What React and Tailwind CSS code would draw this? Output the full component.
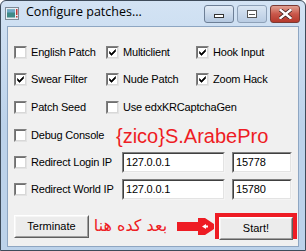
import React from "react";

const F = { fontFamily: '"Liberation Sans", Arial, sans-serif' };

function Check({ checked }) {
  return (
    <div className="w-[13px] h-[13px] shrink-0 border border-t-[#808080] border-l-[#808080] border-b-[#e3e3e3] border-r-[#e3e3e3] bg-white flex items-center justify-center">
      <div className="w-[11px] h-[11px] border border-t-[#6f6f6f] border-l-[#6f6f6f] border-b-[#d8d8d8] border-r-[#d8d8d8] bg-white flex items-center justify-center">
        {checked && (
          <svg width="9" height="9" viewBox="0 0 9 9">
            <path d="M1.5 3.5 L3.5 5.5 L7.5 1.5 L7.5 3.5 L3.5 7.5 L1.5 5.5 Z" fill="#000" stroke="#000" strokeWidth="0.6" />
          </svg>
        )}
      </div>
    </div>
  );
}

function CB({ label, checked, w }) {
  return (
    <div className={`flex items-center gap-[4px] ${w || ""}`}>
      <Check checked={checked} />
      <span className="text-[11px] tracking-[-0.2px] text-black leading-none whitespace-nowrap">{label}</span>
    </div>
  );
}

function TextBox({ value, w }) {
  return (
    <div className={`${w} h-[21px] border border-t-[#808080] border-l-[#808080] border-b-[#f4f4f4] border-r-[#f4f4f4] bg-white`}>
      <div className="h-full border border-t-[#404040] border-l-[#404040] border-b-[#e3e3e3] border-r-[#e3e3e3] flex items-center pl-[2px] text-[11px] tracking-[-0.2px] text-black">
        {value}
      </div>
    </div>
  );
}

function Button({ children, w }) {
  return (
    <div className={`${w} h-[23px] border border-t-white border-l-white border-b-[#5f5f5f] border-r-[#5f5f5f] bg-[#ececec]`}>
      <div className="h-full border border-t-[#f6f6f6] border-l-[#f6f6f6] border-b-[#a0a0a0] border-r-[#a0a0a0] flex items-center justify-center text-[11px] text-black">
        {children}
      </div>
    </div>
  );
}

export default function App() {
  return (
    <div className="w-[306px] h-[251px] overflow-hidden" style={F}>
      <div className="w-[306px] h-[251px] flex flex-col border border-[#3e4b5a] rounded-t-[6px] bg-[#bcd2ea] bg-gradient-to-b from-[#d3e3f4] via-[#bcd2ea] to-[#bcd2ea]">
        {/* title bar */}
        <div className="h-[25px] flex items-start shrink-0">
          <svg className="ml-[4px] mt-[6px]" width="14" height="13" viewBox="0 0 14 13">
            <rect x="0.5" y="0.5" width="13" height="12" fill="#e8eef4" stroke="#7d8a96" />
            <rect x="2" y="2.5" width="8" height="8" fill="#3f8a88" />
            <rect x="2" y="2.5" width="8" height="3" fill="#6fa9c8" />
            <rect x="11" y="2" width="1.5" height="6" fill="#c23a3a" />
            <rect x="11" y="9" width="1.5" height="1.5" fill="#c23a3a" />
          </svg>
          <span className="ml-[7px] mt-[5px] text-[12.5px] text-black leading-none" style={{ fontFamily: '"Open Sans", "Liberation Sans", sans-serif' }}>
            Configure patches...
          </span>
          <div className="ml-auto mr-[5px] mt-[4px] flex gap-[3px]">
            <div className="w-[30px] h-[18px] rounded-[3px] border border-[#6d7f96] bg-gradient-to-b from-[#e3ecf6] to-[#b4c8e0] flex items-center justify-center">
              <div className="w-[10px] h-[4px] mt-[4px] border border-[#333] bg-white" />
            </div>
            <div className="w-[30px] h-[18px] rounded-[3px] border border-[#8ea1b8] bg-gradient-to-b from-[#d9e5f2] to-[#b9cce3] flex items-center justify-center">
              <div className="w-[10px] h-[8px] border border-[#555] bg-white flex items-center justify-center">
                <div className="w-[6px] h-[2px] border-b border-[#555]" />
              </div>
            </div>
            <div className="w-[30px] h-[18px] rounded-[3px] border border-[#7a3a34] bg-gradient-to-b from-[#e0a193] via-[#c9574a] to-[#b5392c] flex items-center justify-center">
              <svg width="13" height="10" viewBox="0 0 13 10">
                <path d="M1.5 1 L11.5 9 M11.5 1 L1.5 9" stroke="#3d1c18" strokeWidth="4" strokeLinecap="square" />
                <path d="M1.5 1 L11.5 9 M11.5 1 L1.5 9" stroke="#ffffff" strokeWidth="2.4" strokeLinecap="square" />
              </svg>
            </div>
          </div>
        </div>
        {/* client */}
        <div className="mx-[6px] mb-[3px] flex-1 border border-[#8ea6c2] bg-[#f0f0f0] flex flex-col pl-[6px]">
          <div className="h-[11px]" />
          <div className="h-[28px] flex items-center">
            <CB label="English Patch" w="w-[92px]" />
            <CB label="Multiclient" checked w="w-[90px]" />
            <CB label="Hook Input" checked />
          </div>
          <div className="h-[27px] flex items-center">
            <CB label="Swear Filter" checked w="w-[92px]" />
            <CB label="Nude Patch" checked w="w-[90px]" />
            <CB label="Zoom Hack" checked />
          </div>
          <div className="h-[29px] flex items-center">
            <CB label="Patch Seed" w="w-[92px]" />
            <CB label="Use edxKRCaptchaGen" />
          </div>
          <div className="h-[27px] flex items-center">
            <CB label="Debug Console" w="w-[102px]" />
            <span className="text-[20px] leading-none text-[#ee1c24] whitespace-nowrap">{"{zico}S.ArabePro"}</span>
          </div>
          <div className="h-[27px] flex items-center">
            <CB label="Redirect Login IP" w="w-[108px]" />
            <TextBox value="127.0.0.1" w="w-[103px]" />
            <div className="w-[7px]" />
            <TextBox value="15778" w="w-[60px]" />
          </div>
          <div className="h-[27px] flex items-center">
            <CB label="Redirect World IP" w="w-[108px]" />
            <TextBox value="127.0.0.1" w="w-[103px]" />
            <div className="w-[7px]" />
            <TextBox value="15780" w="w-[60px]" />
          </div>
          <div className="h-[10px]" />
          <div className="h-[26px] flex items-center">
            <Button w="w-[75px] shrink-0">Terminate</Button>
            <div className="ml-[6px] w-[71px] shrink-0 flex justify-center">
              <span
                dir="rtl"
                className="text-[16px] leading-none text-[#ee1c24] whitespace-nowrap"
                style={{ fontFamily: '"DejaVu Sans", sans-serif' }}
              >
                بعد كده هنا
              </span>
            </div>
            <svg className="ml-[11px] shrink-0" width="37" height="17" viewBox="0 0 37 17">
              <path d="M0 4 H21 V0 H28 L37 6 V11 L28 17 H21 V13 H0 Z" fill="#ee1c24" />
              <path d="M25 8.5 L29 6 V11 Z M29 7.5 H31 V9.5 H29 Z" fill="#ffffff" />
            </svg>
            <div className="ml-[1px] w-[82px] shrink-0 h-[26px] border-[4px] border-[#ee1c24] flex">
              <div className="flex-1">
                <Button w="w-full">Start!</Button>
              </div>
            </div>
          </div>
        </div>
      </div>
    </div>
  );
}
